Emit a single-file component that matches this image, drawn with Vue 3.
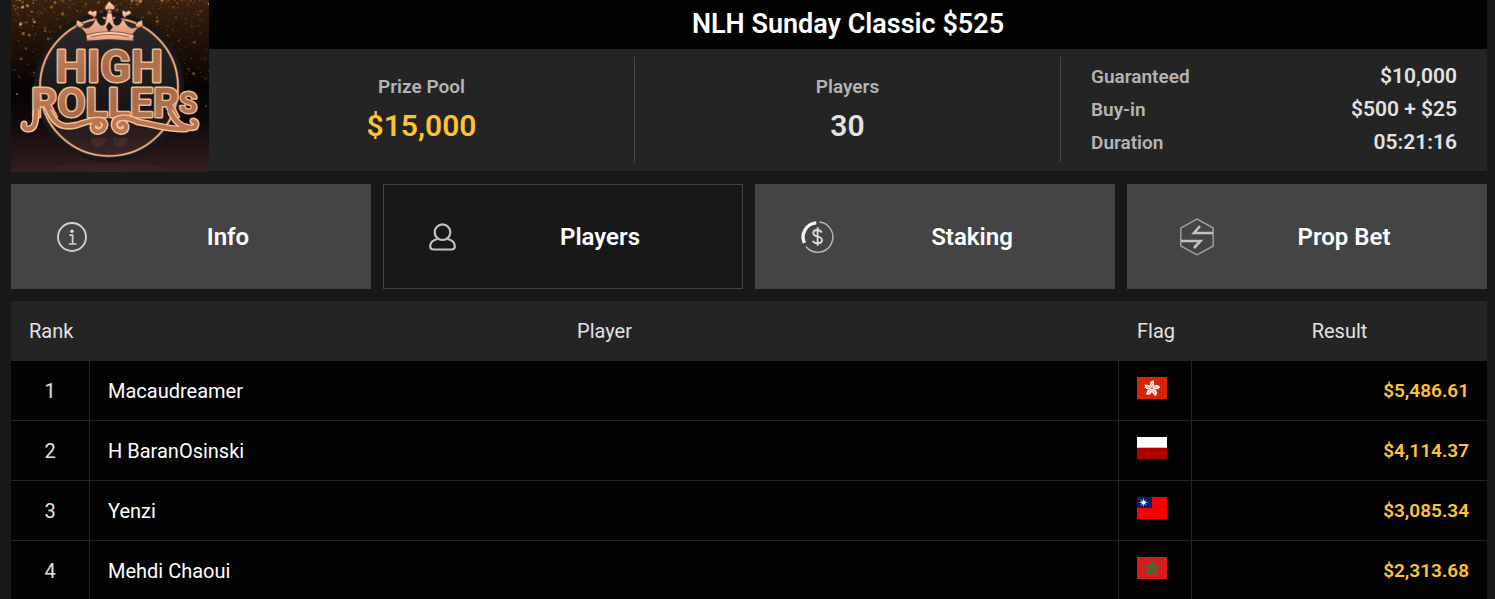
<script setup>
import { ref } from 'vue'

const terms = [
  { label: 'Guaranteed', value: '$10,000' },
  { label: 'Buy-in', value: '$500 + $25' },
  { label: 'Duration', value: '05:21:16' }
]

const tabs = [
  { id: 'info', label: 'Info' },
  { id: 'players', label: 'Players' },
  { id: 'staking', label: 'Staking' },
  { id: 'prop', label: 'Prop Bet' }
]
const active = ref('players')

const players = [
  { rank: 1, name: 'Macaudreamer', flag: 'hk', country: 'Hong Kong', result: '$5,486.61' },
  { rank: 2, name: 'H BaranOsinski', flag: 'pl', country: 'Poland', result: '$4,114.37' },
  { rank: 3, name: 'Yenzi', flag: 'tw', country: 'Taiwan', result: '$3,085.34' },
  { rank: 4, name: 'Mehdi Chaoui', flag: 'ma', country: 'Morocco', result: '$2,313.68' }
]

// Deterministic glitter, denser towards the top of the emblem
let seed = 11
const rand = () => {
  seed = (seed * 16807) % 2147483647
  return seed / 2147483647
}
const tones = ['#8a5424', '#b87a3c', '#6b3d18', '#e0b070', '#54300f']
const sparks = Array.from({ length: 1000 }, () => ({
  x: rand() * 198,
  y: Math.pow(rand(), 1.5) * 82,
  r: 0.4 + Math.pow(rand(), 5) * 1.4,
  fill: tones[Math.floor(rand() * 5)],
  o: 0.2 + rand() * 0.55
}))
</script>

<template>
  <main class="page">
    <header class="summary">
      <svg class="emblem" viewBox="0 0 198 172" role="img" aria-label="High Rollers">
        <defs>
          <linearGradient id="night" x1="0" y1="0" x2="0" y2="1">
            <stop offset="0" stop-color="#3a210f" />
            <stop offset="0.28" stop-color="#1c0f08" />
            <stop offset="0.52" stop-color="#050304" />
            <stop offset="0.72" stop-color="#110a0c" />
            <stop offset="1" stop-color="#341e1f" />
          </linearGradient>
          <linearGradient id="disc" x1="0" y1="0" x2="0" y2="1">
            <stop offset="0" stop-color="#292a2b" />
            <stop offset="0.65" stop-color="#171517" />
            <stop offset="1" stop-color="#3a2426" />
          </linearGradient>
          <linearGradient id="copper" x1="0" y1="0" x2="1" y2="1">
            <stop offset="0" stop-color="#c98760" />
            <stop offset="0.5" stop-color="#a86a48" />
            <stop offset="1" stop-color="#bd7d55" />
          </linearGradient>
          <linearGradient id="rose" x1="0" y1="0" x2="0" y2="1">
            <stop offset="0" stop-color="#ffd9b5" />
            <stop offset="1" stop-color="#dc9274" />
          </linearGradient>
        </defs>
        <rect width="198" height="172" fill="url(#night)" />
        <circle v-for="(s, i) in sparks" :key="i" :cx="s.x" :cy="s.y" :r="s.r" :fill="s.fill" :opacity="s.o" />
        <circle cx="6" cy="94" r="1" fill="#8a7468" />
        <circle cx="195" cy="106" r="1" fill="#5a4840" />
        <ellipse cx="98" cy="168" rx="60" ry="4" fill="#50302d" opacity="0.25" />
        <circle cx="98" cy="87" r="75" fill="#19171a" />
        <circle cx="98" cy="87" r="69" fill="url(#disc)" stroke="#7d4533" stroke-width="3" />
        <circle cx="98" cy="87" r="69" fill="none" stroke="#e6b287" stroke-width="1.6" />

        <g fill="#8c5945" opacity="0.2">
          <path d="M80 138H95Q95 146 87 148Q80 146 80 138ZM102 138H117Q117 146 109 148Q102 146 102 138Z" />
        </g>

        <path d="M76 41 L71 29 L64 26 L79 28 L86 19 L82 15 L90 16 L98 25 L106 16 L114 15 L110 19 L117 28 L132 26 L125 29 L120 41 Q98 34 76 41Z" fill="#1c191a" />
        <g fill="url(#rose)" stroke="#643a2b" stroke-width="0.7">
          <path d="M76 35 L68 25 Q79 34 85 18 Q89 29 94 24 L97 10 H100 L103 24 Q108 29 112 18 Q118 34 129 25 L121 35 Q98 30 76 35Z" />
          <path d="M75 35 Q98 28 123 35 L122 41 Q98 38 76 41Z" />
          <path d="M98 1 C97 4 93 6 94 9 Q95 11 98 9 L96 13 H101 L99 9 Q103 11 104 8 C104 5 100 4 98 1Z" />
          <path d="M83 18 C82 14 76 16 77 12 Q79 9 82 12 Q84 9 86 12 Q86 16 83 18Z" />
          <path d="M114 18 C115 14 121 16 120 12 Q118 9 115 12 Q112 9 111 12 Q111 16 114 18Z" />
          <path d="M69 28 L65 25 L66 20 L70 22 L73 25Z" />
          <path d="M127 28 L132 26 L131 20 L127 22 L124 25Z" />
        </g>
        <path d="M98 22 L102 27 L98 32 L95 27Z" fill="#211b1d" />
        <path d="M80 37 Q98 32 118 37" fill="none" stroke="#9d5d45" stroke-width="1" />

        <g class="letters" text-anchor="middle">
          <text x="98" y="82" font-size="45">HIGH</text>
          <text x="103" y="117" font-size="41">ROLLER<tspan font-size="29" dy="-4">S</tspan></text>
        </g>
        <g fill="none" stroke-linecap="round">
          <g stroke="#f3be91" stroke-width="7">
            <path d="M25 112C25 124 23 130 16 129Q12 128 13 124" />
            <path d="M39 113C45 126 53 128 66 125C77 121 94 116 94 125C93 133 81 134 82 126Q84 121 88 125" />
            <path d="M160 113C165 123 173 130 184 127Q187 122 182 121" />
            <path d="M175 129C158 130 141 124 127 122C115 116 103 116 103 125C104 133 116 134 115 126Q113 121 109 125" />
          </g>
          <g stroke="#b97650" stroke-width="4">
            <path d="M25 110C25 124 23 130 16 129Q12 128 13 124" />
            <path d="M38 111C45 126 53 128 66 125C77 121 94 116 94 125C93 133 81 134 82 126Q84 121 88 125" />
            <path d="M159 111C165 123 173 130 184 127Q187 122 182 121" />
            <path d="M175 129C158 130 141 124 127 122C115 116 103 116 103 125C104 133 116 134 115 126Q113 121 109 125" />
          </g>
        </g>
      </svg>

      <div class="details">
        <h1 class="title">NLH Sunday Classic $525</h1>
        <div class="stats">
          <section class="stat">
            <span class="stat-label">Prize Pool</span>
            <strong class="stat-value gold">$15,000</strong>
          </section>
          <section class="stat">
            <span class="stat-label">Players</span>
            <strong class="stat-value">30</strong>
          </section>
          <dl class="terms">
            <div v-for="t in terms" :key="t.label" class="term">
              <dt>{{ t.label }}</dt>
              <dd>{{ t.value }}</dd>
            </div>
          </dl>
        </div>
      </div>
    </header>

    <nav class="tabs">
      <button
        v-for="tab in tabs"
        :key="tab.id"
        type="button"
        class="tab"
        :class="{ active: active === tab.id }"
        @click="active = tab.id"
      >
        <svg v-if="tab.id === 'info'" class="icon" width="30" height="30" viewBox="0 0 30 30" aria-hidden="true">
          <circle cx="15" cy="15" r="14" fill="none" stroke="#cfcfcf" stroke-width="1.9" />
          <circle cx="15" cy="9.3" r="1.8" fill="#d8d8d8" />
          <path d="M12.3 13.2H15.6V21.8M11.8 22H19.4" fill="none" stroke="#cfcfcf" stroke-width="1.7" />
        </svg>
        <svg v-else-if="tab.id === 'players'" class="icon" width="27" height="28" viewBox="0 0 27 28" fill="none" stroke="#c4c4c4" stroke-width="2.2" aria-hidden="true">
          <circle cx="13.5" cy="9.2" r="7.8" />
          <path d="M8.5 16C4 17 1.2 19.5 1.2 23.2Q1.2 26.5 4.5 26.5H22.5Q25.8 26.5 25.8 23.2C25.8 19.5 23 17 18.5 16" />
        </svg>
        <svg v-else-if="tab.id === 'staking'" class="icon" width="33" height="32" viewBox="0 0 33 32" fill="none" aria-hidden="true">
          <path d="M3.4 22A14.2 14.2 0 0 1 15.3 1.9" stroke="#f4f4f4" stroke-width="3.4" />
          <path d="M18.3 .9A15.2 15.2 0 1 1 4.8 25.5" stroke="#b4b4b4" stroke-width="1.5" />
          <path d="M20.8 11.5Q19.3 9 16.3 9Q12.3 9 12.3 12.2C12.3 16.5 21 14.5 21 19C21 22.3 17.3 22.3 16.3 22.3Q13.1 22.3 11.8 19.8M16.6 6.2V24.8" stroke="#e0e0e0" stroke-width="1.8" />
        </svg>
        <svg v-else class="icon" width="42" height="38" viewBox="0 0 42 38" fill="none" aria-hidden="true">
          <path d="M24 1L40.2 10V28L24 37L7.8 28V10Z" stroke="#9b9b9b" stroke-width="1.5" />
          <path d="M40 15H21L27 8M8 23H27.5L21 30" stroke="#c2c2c2" stroke-width="2.6" />
        </svg>
        <span class="tab-label">{{ tab.label }}</span>
      </button>
    </nav>

    <table class="results">
      <colgroup>
        <col class="col-rank" />
        <col />
        <col class="col-flag" />
        <col class="col-result" />
      </colgroup>
      <thead>
        <tr>
          <th scope="col">Rank</th>
          <th scope="col">Player</th>
          <th scope="col">Flag</th>
          <th scope="col">Result</th>
        </tr>
      </thead>
      <tbody>
        <tr v-for="p in players" :key="p.rank">
          <td class="rank">{{ p.rank }}</td>
          <td class="name">{{ p.name }}</td>
          <td class="flag-cell">
            <svg class="flag" viewBox="0 0 30 22" role="img" :aria-label="p.country">
              <template v-if="p.flag === 'hk'">
                <rect width="30" height="22" fill="#d82400" />
                <g transform="translate(15 11.5)">
                  <g v-for="n in 5" :key="n" :transform="`rotate(${n * 72 + 8})`">
                    <path d="M0 -.5C-4.5 -3 -3 -8 1 -8.3C-.2 -6.5 3.5 -5 0 -.5Z" fill="#fff" />
                    <path d="M0 -2Q-1.5 -4 -.3 -5.5" fill="none" stroke="#e06a55" stroke-width=".8" />
                  </g>
                </g>
              </template>
              <template v-else-if="p.flag === 'pl'">
                <rect width="30" height="11" fill="#fff" />
                <rect y="11" width="30" height="11" fill="#ae0000" />
                <rect y="10" width="30" height="1" fill="#e2b5b5" />
              </template>
              <template v-else-if="p.flag === 'tw'">
                <rect width="30" height="22" fill="#f80000" />
                <rect width="15" height="11" fill="#08206c" />
                <path d="M6.5 1.5V9.5M2.5 5.5H10.5M3.7 2.7L9.3 8.3M9.3 2.7L3.7 8.3" stroke="#aab6dc" stroke-width=".9" />
                <circle cx="6.5" cy="5.5" r="2.1" fill="#fff" />
              </template>
              <template v-else>
                <rect width="30" height="22" fill="#d91a1d" />
                <path d="M15 4.5L19 17.5L8.5 9.5H21.5L11 17.5Z" fill="none" stroke="#2f7640" stroke-width="1.4" />
              </template>
            </svg>
          </td>
          <td class="result">{{ p.result }}</td>
        </tr>
      </tbody>
    </table>
  </main>
</template>

<style>
html,
body {
  background: #181818;
}
body {
  margin: 0;
}
</style>

<style scoped>
.page {
  height: 100vh;
  overflow: hidden;
  box-sizing: border-box;
  padding: 0 8px 0 11px;
  background: #181818;
  color: #fff;
  font-family: Roboto, "Liberation Sans", sans-serif;
  font-size: 20px;
}
.summary {
  display: flex;
  align-items: flex-start;
  margin-bottom: 12px;
}
.emblem {
  display: block;
  flex: none;
  width: 198px;
  height: 172px;
}
.letters {
  font-family: Roboto, "Liberation Sans", sans-serif;
  font-weight: 700;
  fill: url(#copper);
  stroke: #efbb8e;
  stroke-width: 3px;
  stroke-linejoin: round;
  paint-order: stroke;
}
.details {
  flex: 1;
  background: #242424;
}
.title {
  margin: 0;
  background: #030303;
  font-size: 27px;
  line-height: 49px;
  font-weight: 600;
  text-align: center;
}
.stats {
  display: grid;
  grid-template-columns: repeat(3, 1fr);
  padding: 8px 0 9px;
}
.stat {
  display: flex;
  flex-direction: column;
  align-items: center;
  justify-content: center;
  border-right: 1px solid #484848;
}
.stat-label,
.term dt {
  color: #b4b4b4;
  font-size: 19px;
  font-weight: 600;
}
.stat-label {
  line-height: 32px;
}
.stat-value {
  color: #e2e2e2;
  font-size: 30px;
  line-height: 46px;
  font-weight: 600;
}
.stat-value.gold {
  color: #ffc233;
}
.terms {
  margin: 0;
  padding: 3px 30px;
}
.term {
  display: flex;
  justify-content: space-between;
  line-height: 33px;
}
.term dd {
  margin: 0;
  color: #e2e2e2;
  font-size: 21px;
  font-weight: 600;
}
.tabs {
  display: grid;
  grid-template-columns: repeat(4, 1fr);
  gap: 12px;
  margin-bottom: 12px;
}
.tab {
  display: grid;
  grid-template-columns: 76px 1fr;
  align-items: center;
  height: 105px;
  padding: 0 47px 0 45px;
  border: 1px solid #444;
  background: #444;
  color: #fff;
  font: inherit;
  font-size: 24px;
  font-weight: 600;
  cursor: pointer;
}
.tab.active {
  background: #181818;
}
.icon {
  display: block;
}
.results {
  width: 100%;
  table-layout: fixed;
  border-collapse: separate;
  border-spacing: 0;
}
.col-rank {
  width: 79px;
}
.col-flag {
  width: 73px;
}
.col-result {
  width: 295px;
}
.results th,
.results td {
  box-sizing: border-box;
  height: 60px;
  padding: 0 18px;
}
.results th {
  background: #242424;
  color: #e2e2e2;
  font-weight: 400;
}
.results td {
  border-right: 1px solid #242424;
  border-bottom: 1px solid #242424;
  background: #030303;
}
.results td:last-child {
  border-right: 0;
}
.results .rank {
  color: #e2e2e2;
  text-align: center;
}
.results .flag-cell {
  padding-top: 16px;
  vertical-align: top;
}
.flag {
  display: block;
  width: 30px;
  height: 22px;
}
.results .result {
  color: #ffc233;
  font-size: 19px;
  font-weight: 600;
  text-align: right;
}
</style>
